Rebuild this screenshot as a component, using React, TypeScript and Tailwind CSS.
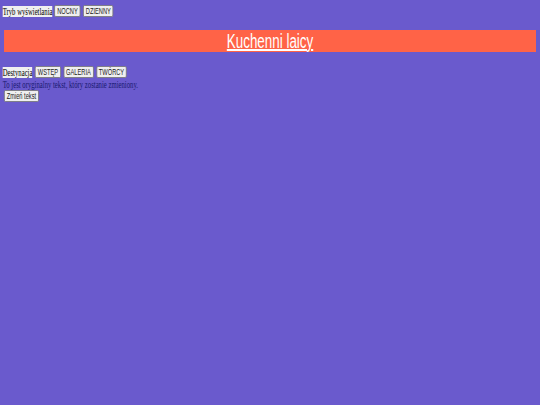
const btn =
  "border border-[#767676] bg-[#efefef] px-[3px] text-[8.5px] leading-[10px] text-[#222] rounded-[2px] [font-family:'Liberation_Sans',Arial,sans-serif]"

const label = "bg-[#f0f0f0] text-[10px] leading-[11px] text-black"

export default function App() {
  return (
    <div className="min-h-[405px] w-[540px] overflow-hidden bg-[#6a5acd]">
      {/* the reference is horizontally squeezed: lay out at 806px, then scale down */}
      <div className="w-[806px] origin-top-left scale-x-[0.67] px-[4px] pt-[5px] [font-family:'Liberation_Serif','Times_New_Roman',serif]">
        <div className="flex items-center">
          <span className={label}>Tryb wyświetlania</span>
          <button className={btn + " ml-[3px]"}>NOCNY</button>
          <button className={btn + " ml-[4px]"}>DZIENNY</button>
        </div>
        <h1 className="mx-[2px] mt-[13px] bg-[#ff6347] text-center text-[20px] leading-[22px] text-white underline [font-family:'Liberation_Sans',Arial,sans-serif]">
          Kuchenni laicy
        </h1>
        <div className="mt-[14px] flex items-center">
          <span className={label}>Destynacja</span>
          <button className={btn + " ml-[4px]"}>WSTĘP</button>
          <button className={btn + " ml-[4px]"}>GALERIA</button>
          <button className={btn + " ml-[4px]"}>TWÓRCY</button>
        </div>
        <p className="mt-[1px] text-[10px] leading-[11px] text-[#191970]">
          To jest oryginalny tekst, który zostanie zmieniony.
        </p>
        <div className="flex">
          <button className={btn + " ml-[2px]"}>Zmień tekst</button>
        </div>
      </div>
    </div>
  )
}
